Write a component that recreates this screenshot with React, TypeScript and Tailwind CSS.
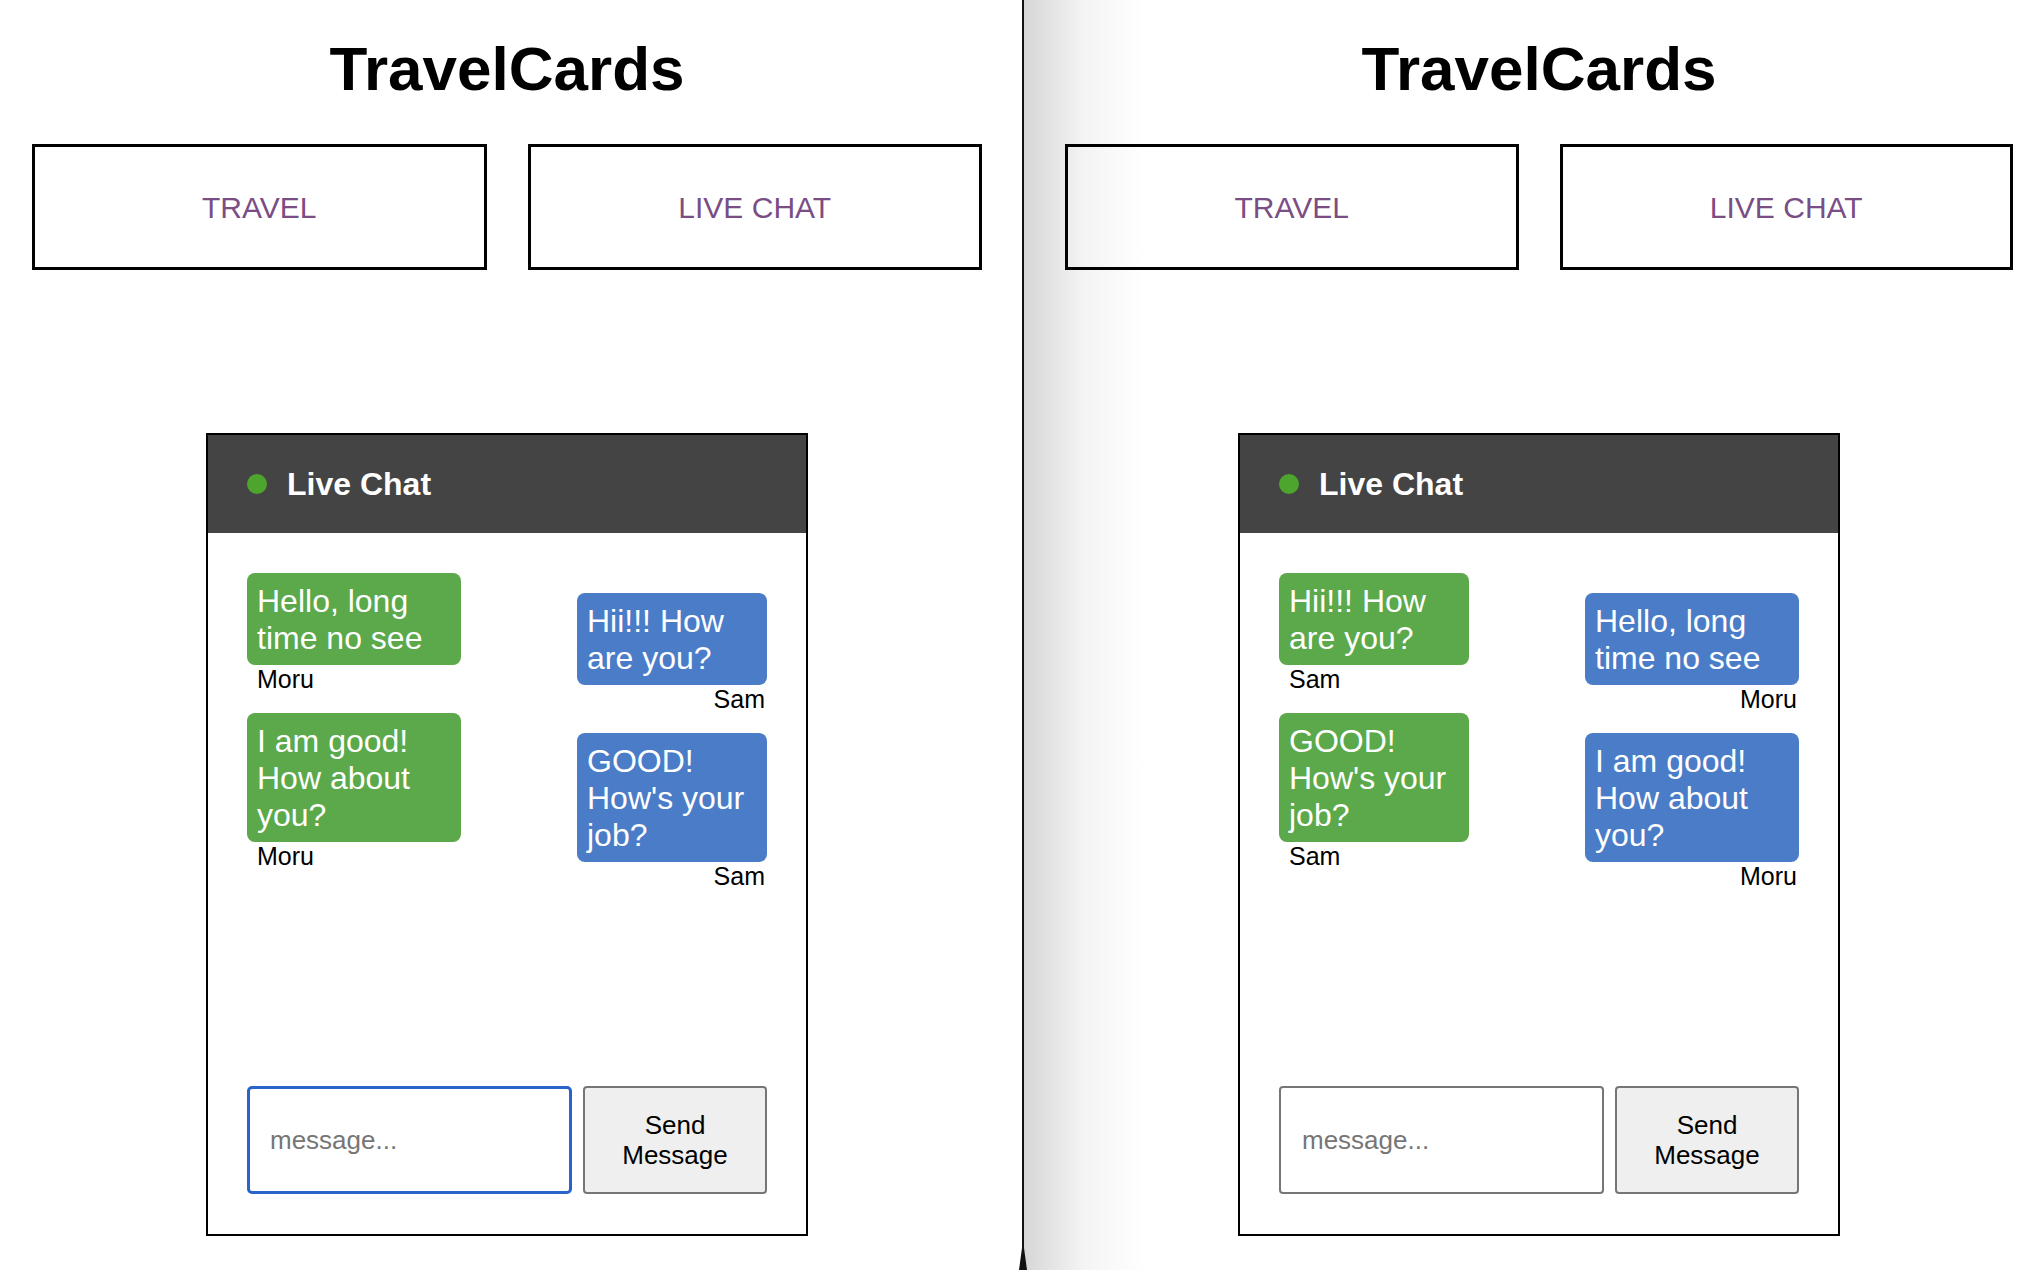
import React from "react";

type Message = {
  text: string;
  name: string;
  wide: boolean;
};

const font = { fontFamily: '"Liberation Sans", Arial, sans-serif' };

function Bubble({ msg, side }: { msg: Message; side: "left" | "right" }) {
  const tone = side === "left" ? "bg-[#5ba94a]" : "bg-[#4a7cc7]";
  return (
    <div className={`flex flex-col ${side === "left" ? "items-start" : "items-end"}`}>
      <div
        className={`${msg.wide ? "w-[214px]" : "w-[190px]"} ${tone} rounded-[8px] px-[10px] pt-[10px] pb-[8px] text-[32px] leading-[37px] text-white`}
      >
        {msg.text}
      </div>
      <div
        className={`text-[25px] leading-[28px] text-black ${side === "left" ? "pl-[10px]" : "pr-[2px]"}`}
      >
        {msg.name}
      </div>
    </div>
  );
}

function ChatCard({
  leftMsgs,
  rightMsgs,
  focused,
}: {
  leftMsgs: Message[];
  rightMsgs: Message[];
  focused: boolean;
}) {
  return (
    <div className="mx-auto mt-[163px] flex h-[803px] w-[602px] flex-col border-2 border-black bg-white">
      {/* header */}
      <div className="flex h-[98px] items-center gap-[20px] bg-[#444444] pl-[39px]">
        <span className="h-[20px] w-[20px] rounded-full bg-[#4ea52e]" />
        <span className="text-[32px] font-bold text-white">Live Chat</span>
      </div>

      <div className="flex flex-1 flex-col px-[39px] pt-[40px] pb-[40px]">
        <div className="flex flex-1 justify-between">
          <div className="flex flex-col gap-[20px]">
            {leftMsgs.map((m, i) => (
              <Bubble key={i} msg={m} side="left" />
            ))}
          </div>
          <div className="flex flex-col gap-[20px] pt-[20px]">
            {rightMsgs.map((m, i) => (
              <Bubble key={i} msg={m} side="right" />
            ))}
          </div>
        </div>

        <div className="flex h-[108px] gap-[11px]">
          <input
            placeholder="message..."
            className={
              focused
                ? "h-full w-[325px] rounded-[5px] border-[3px] border-[#2a63c9] bg-white pl-[20px] text-[26px] outline-none placeholder:text-[#767676]"
                : "h-full w-[325px] rounded-[4px] border-2 border-[#767676] bg-white pl-[21px] text-[26px] outline-none placeholder:text-[#767676]"
            }
            style={font}
          />
          <button
            className="h-full w-[184px] rounded-[4px] border-2 border-[#767676] bg-[#efefef] text-[26px] leading-[30px] text-black"
            style={font}
          >
            Send
            <br />
            Message
          </button>
        </div>
      </div>
    </div>
  );
}

function Panel({
  leftMsgs,
  rightMsgs,
  focused,
}: {
  leftMsgs: Message[];
  rightMsgs: Message[];
  focused: boolean;
}) {
  return (
    <div className="flex flex-col">
      <h1 className="mt-[38px] text-center text-[62px] leading-[62px] font-bold text-black">
        TravelCards
      </h1>
      <div className="mt-[44px] grid grid-cols-2 gap-[41px]">
        <button className="flex h-[126px] items-center justify-center border-[3px] border-black text-[30px] text-[#7a4e84]">
          TRAVEL
        </button>
        <button className="flex h-[126px] items-center justify-center border-[3px] border-black text-[30px] text-[#7a4e84]">
          LIVE CHAT
        </button>
      </div>
      <ChatCard leftMsgs={leftMsgs} rightMsgs={rightMsgs} focused={focused} />
    </div>
  );
}

const moru1 = { text: "Hello, long time no see", name: "Moru", wide: true };
const moru2 = { text: "I am good! How about you?", name: "Moru", wide: true };
const sam1 = { text: "Hii!!! How are you?", name: "Sam", wide: false };
const sam2 = { text: "GOOD! How's your job?", name: "Sam", wide: false };

export default function App() {
  return (
    <div className="flex h-[1270px] w-[2044px] overflow-hidden bg-white" style={font}>
      {/* Moru's screen */}
      <div className="w-[1022px] shrink-0 pl-[32px]">
        <div className="w-[950px]">
          <Panel leftMsgs={[moru1, moru2]} rightMsgs={[sam1, sam2]} focused />
        </div>
      </div>

      {/* split divider */}
      <div className="relative w-[2px] shrink-0 bg-[#111111]">
        <svg
          className="absolute bottom-0 left-[-3px]"
          width="8"
          height="22"
          viewBox="0 0 8 22"
        >
          <polygon points="3,0 5,0 8,22 0,22" fill="#111111" />
        </svg>
      </div>

      {/* Sam's screen */}
      <div className="flex-1 bg-[linear-gradient(to_right,#d6d6d6,#f4f4f4_60px,#ffffff_120px)] pl-[41px]">
        <div className="w-[948px]">
          <Panel leftMsgs={[sam1, sam2]} rightMsgs={[moru1, moru2]} focused={false} />
        </div>
      </div>
    </div>
  );
}
